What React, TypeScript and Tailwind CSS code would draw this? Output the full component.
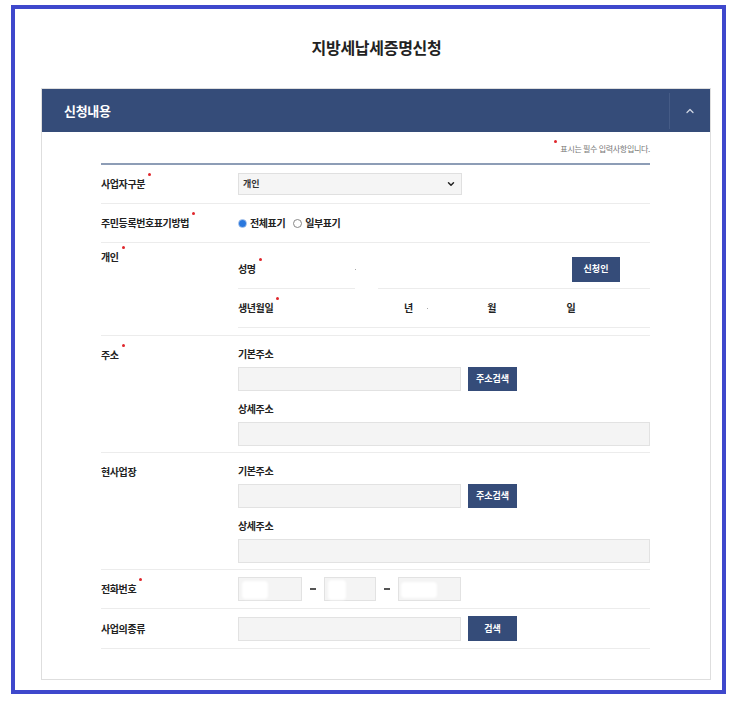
import { ChevronDown, ChevronUp } from 'lucide-react';

const font = { fontFamily: '"Noto Sans CJK KR", "Noto Sans", sans-serif' };

function Req() {
    return <span className="relative top-[-4px] ml-[3px] inline-block h-[3px] w-[3px] rounded-full bg-[#e0262b] align-top" />;
}

function Label({ text, req }: { text: string; req?: boolean }) {
    return (
        <div className="text-[10px] leading-[14px] font-bold tracking-[-0.4px] text-[#222]">
            {text}
            {req && <Req />}
        </div>
    );
}

function Btn({ text, className = '' }: { text: string; className?: string }) {
    return (
        <div className={`flex items-center justify-center bg-[#354c79] text-[9px] leading-[12px] font-bold text-white ${className}`}>
            {text}
        </div>
    );
}

function Field({ className = '' }: { className?: string }) {
    return <div className={`h-[24px] border border-[#e2e2e2] bg-[#f4f4f4] ${className}`} />;
}

function AddressBlock() {
    return (
        <div className="flex flex-col pt-[11px] pb-[6px]">
            <Label text="기본주소" />
            <div className="mt-[6px] flex gap-[7px]">
                <Field className="w-[223px]" />
                <Btn text="주소검색" className="h-[24px] w-[49px]" />
            </div>
            <div className="mt-[11px]">
                <Label text="상세주소" />
            </div>
            <Field className="mt-[6px] w-full" />
        </div>
    );
}

export default function App() {
    return (
        <div className="min-h-[702px] bg-white text-[10px] leading-[14px]" style={font}>
            <div className="ml-[11px] mt-[5px] h-[689px] w-[715px] border-4 border-[#3e48cc] bg-white pl-[26px] pr-[10px]">
                <h1 className="pt-[28px] pb-[31px] text-center text-[16px] leading-[20px] font-semibold tracking-[-0.3px] text-[#222]">
                    지방세납세증명신청
                </h1>

                <div className="h-[592px] w-[670px] border border-[#dedede]">
                    <div className="flex h-[43px] items-center bg-[#354c79]">
                        <span className="flex-1 pl-[22px] text-[13px] leading-[18px] font-bold tracking-[-0.3px] text-white">신청내용</span>
                        <div className="flex h-[36px] w-[41px] items-center justify-center border-l border-[#455b86]">
                            <ChevronUp size={12} strokeWidth={2.5} className="text-[#cfd6e3]" />
                        </div>
                    </div>

                    <div className="pl-[59px] pr-[60px]">
                        <div className="flex items-start justify-end pt-[12px] pb-[9px] text-[8px] leading-[10px] tracking-[-0.3px] text-[#777]">
                            <span className="relative top-[-4px] mr-[3px] inline-block h-[3px] w-[3px] rounded-full bg-[#e0262b]" />
                            표시는 필수 입력사항입니다.
                        </div>

                        <div className="border-t-2 border-[#8d9db6]">
                            {/* 사업자구분 */}
                            <div className="flex h-[39px] items-center border-b border-[#ececec]">
                                <div className="w-[137px]">
                                    <Label text="사업자구분" req />
                                </div>
                                <div className="flex h-[22px] w-[224px] items-center justify-between border border-[#e0e0e0] bg-[#f5f5f5] pl-[4px] pr-[5px]">
                                    <span className="text-[9px] font-bold text-[#333]">개인</span>
                                    <ChevronDown size={10} strokeWidth={3.5} className="text-[#222]" />
                                </div>
                            </div>

                            {/* 주민등록번호표기방법 */}
                            <div className="flex h-[39px] items-center border-b border-[#ececec]">
                                <div className="w-[137px]">
                                    <Label text="주민등록번호표기방법" req />
                                </div>
                                <div className="flex items-center text-[10px] font-bold tracking-[-0.4px] text-[#222]">
                                    <span className="flex h-[9px] w-[9px] items-center justify-center rounded-full border border-[#8fb3e6] bg-white">
                                        <span className="h-[7px] w-[7px] rounded-full bg-[#2a78de]" />
                                    </span>
                                    <span className="ml-[3px]">전체표기</span>
                                    <span className="ml-[8px] h-[9px] w-[9px] rounded-full border border-[#888] bg-white" />
                                    <span className="ml-[3px]">일부표기</span>
                                </div>
                            </div>

                            {/* 개인 */}
                            <div className="flex border-b border-[#ececec] pt-[7px] pb-[7px]">
                                <div className="w-[137px]">
                                    <Label text="개인" req />
                                </div>
                                <div className="flex-1">
                                    <div className="relative flex h-[39px] items-center border-b border-[#ececec]">
                                        <div className="w-[117px]">
                                            <Label text="성명" req />
                                        </div>
                                        <span className="h-[1px] w-[1px] bg-[#aaa]" />
                                        <span className="absolute bottom-[-1px] left-[117px] h-[2px] w-[23px] bg-white" />
                                        <Btn text="신청인" className="ml-auto mr-[30px] h-[25px] w-[48px]" />
                                    </div>
                                    <div className="flex h-[39px] items-center border-b border-[#ececec] text-[10px] font-bold text-[#222]">
                                        <div className="w-[166px]">
                                            <Label text="생년월일" req />
                                        </div>
                                        <span>년</span>
                                        <span className="ml-[14px] h-[1px] w-[1px] bg-[#aaa]" />
                                        <span className="ml-[59px]">월</span>
                                        <span className="ml-[70px]">일</span>
                                    </div>
                                </div>
                            </div>

                            {/* 주소 */}
                            <div className="flex border-b border-[#ececec]">
                                <div className="w-[137px] pt-[12px]">
                                    <Label text="주소" req />
                                </div>
                                <div className="flex-1">
                                    <AddressBlock />
                                </div>
                            </div>

                            {/* 현사업장 */}
                            <div className="flex border-b border-[#ececec]">
                                <div className="w-[137px] pt-[12px]">
                                    <Label text="현사업장" />
                                </div>
                                <div className="flex-1">
                                    <AddressBlock />
                                </div>
                            </div>

                            {/* 전화번호 */}
                            <div className="flex h-[39px] items-center border-b border-[#ececec]">
                                <div className="w-[137px]">
                                    <Label text="전화번호" req />
                                </div>
                                <div className="relative h-[24px] w-[64px] border border-[#e2e2e2] bg-[#f4f4f4]">
                                    <span className="absolute left-[3px] top-[3px] h-[18px] w-[26px] rounded-[4px] bg-white blur-[1px]" />
                                </div>
                                <span className="mx-[8px] h-[2px] w-[6px] bg-[#555]" />
                                <div className="relative h-[24px] w-[52px] border border-[#e2e2e2] bg-[#f4f4f4]">
                                    <span className="absolute left-[3px] top-[2px] h-[20px] w-[18px] rounded-[4px] bg-white blur-[1px]" />
                                </div>
                                <span className="mx-[8px] h-[2px] w-[6px] bg-[#555]" />
                                <div className="relative h-[24px] w-[63px] border border-[#e2e2e2] bg-[#f4f4f4]">
                                    <span className="absolute left-[2px] top-[4px] h-[16px] w-[36px] rounded-[4px] bg-white blur-[1px]" />
                                </div>
                            </div>

                            {/* 사업의종류 */}
                            <div className="flex h-[40px] items-center border-b border-[#ececec]">
                                <div className="w-[137px]">
                                    <Label text="사업의종류" />
                                </div>
                                <Field className="w-[223px]" />
                                <Btn text="검색" className="ml-[7px] h-[25px] w-[49px]" />
                            </div>
                        </div>
                    </div>
                </div>
            </div>
        </div>
    );
}
